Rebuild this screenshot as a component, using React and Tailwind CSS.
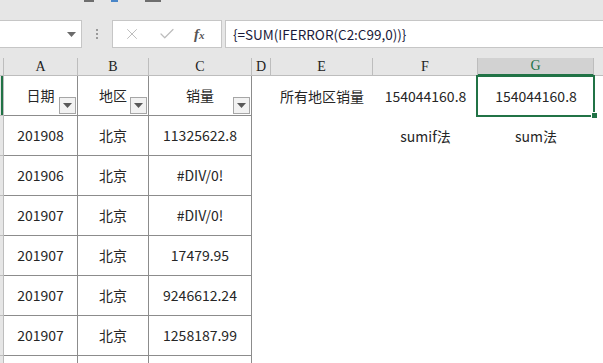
import { X, Check } from "lucide-react";

const cellFont = { fontFamily: '"Noto Sans CJK SC", "Noto Sans", sans-serif' };

const cols = [
  { key: "A", w: "w-[74px]" },
  { key: "B", w: "w-[71px]" },
  { key: "C", w: "w-[103px]" },
  { key: "D", w: "w-[19px]" },
  { key: "E", w: "w-[102px]" },
  { key: "F", w: "w-[105px]" },
  { key: "G", w: "w-[116px]" },
];

const rows = [
  ["201908", "北京", "11325622.8"],
  ["201906", "北京", "#DIV/0!"],
  ["201907", "北京", "#DIV/0!"],
  ["201907", "北京", "17479.95"],
  ["201907", "北京", "9246612.24"],
  ["201907", "北京", "1258187.99"],
  ["", "", ""],
];

const FilterButton = () => (
  <div className="absolute right-[1px] bottom-[1px] w-[17px] h-[17px] bg-[#f2f2f2] border border-[#a6a6a6] flex items-center justify-center">
    <svg width="9" height="5" viewBox="0 0 9 5">
      <path d="M0 0 H9 L4.5 5 Z" fill="#595959" />
    </svg>
  </div>
);

const TableCell = ({ w, children, filter }) => (
  <div
    className={`${w} h-full shrink-0 border-r border-b border-[#8c8c8c] flex items-center justify-center text-[14px] text-[#262626] relative`}
    style={cellFont}
  >
    {children}
    {filter && <FilterButton />}
  </div>
);

const PlainCell = ({ w, children, selected }) => (
  <div
    className={`${w} h-full shrink-0 flex items-center justify-center text-[14px] text-[#262626] relative`}
    style={cellFont}
  >
    {children}
    {selected && (
      <>
        <div className="absolute left-[-2px] top-[-1px] right-[-1px] bottom-[-1px] border-2 border-[#217346]" />
        <div className="absolute right-[-4px] bottom-[-3px] w-[5px] h-[5px] bg-[#217346] border border-white box-content" />
      </>
    )}
  </div>
);

const RowStub = ({ active }) => (
  <div className="w-[4px] h-full shrink-0 bg-[#e6e6e6] border-r border-b border-[#bdbdbd] relative">
    {active && <div className="absolute left-[1px] top-0 bottom-0 w-[2px] bg-[#217346]" />}
  </div>
);

export default function App() {
  return (
    <div className="w-[603px] h-[363px] overflow-hidden bg-white flex flex-col">
      {/* toolbar strip */}
      <div className="h-[58px] shrink-0 bg-[#e6e6e6] flex flex-col">
        <div className="h-[20px] relative">
          <div className="absolute left-[84px] top-0 w-[10px] h-[2px] bg-[#6e6e6e]" />
          <div className="absolute left-[111px] top-0 w-[7px] h-[2px] bg-[#4a86c8]" />
          <div className="absolute left-[145px] top-0 w-[16px] h-[2px] bg-[#6e6e6e]" />
        </div>
        <div className="h-[28px] flex items-stretch">
          <div className="w-[82px] bg-white border border-[#c6c6c6] border-l-0 flex items-center justify-end pr-[5px]">
            <svg width="9" height="5" viewBox="0 0 9 5">
              <path d="M0 0 H9 L4.5 5 Z" fill="#6b6b6b" />
            </svg>
          </div>
          <div className="w-[30px] flex flex-col items-center justify-center gap-[2px]">
            <div className="w-[2px] h-[2px] bg-[#9a9a9a]" />
            <div className="w-[2px] h-[2px] bg-[#9a9a9a]" />
            <div className="w-[2px] h-[2px] bg-[#9a9a9a]" />
          </div>
          <div className="w-[110px] bg-white border border-[#c6c6c6] flex items-center pl-[10px]">
            <X size={18} strokeWidth={1.3} color="#bcbcbc" />
            <Check size={18} strokeWidth={1.6} color="#bcbcbc" className="ml-[17px]" />
            <span
              className="ml-[18px] text-[15px] italic font-bold text-[#555]"
              style={{ fontFamily: '"Liberation Serif", serif' }}
            >
              f<span className="text-[11px]">x</span>
            </span>
          </div>
          <div className="w-[3px]" />
          <div
            className="flex-1 bg-white border border-[#c6c6c6] border-r-0 flex items-center pl-[7px] text-[13.5px] text-[#1a1a3a]"
            style={cellFont}
          >
            {"{=SUM(IFERROR(C2:C99,0))}"}
          </div>
        </div>
      </div>

      {/* column headers */}
      <div
        className="h-[18px] shrink-0 flex bg-[#e6e6e6] text-[14px] text-[#222]"
        style={{ fontFamily: '"Liberation Serif", serif' }}
      >
        <div className="w-[4px] shrink-0 border-r border-b border-[#bdbdbd]" />
        {cols.map((c) =>
          c.key === "G" ? (
            <div
              key={c.key}
              className={`${c.w} shrink-0 bg-[#d2d2d2] border-r border-[#bdbdbd] border-b-2 border-b-[#217346] flex items-center justify-center text-[#217346] leading-none`}
            >
              {c.key}
            </div>
          ) : (
            <div
              key={c.key}
              className={`${c.w} shrink-0 border-r border-b border-[#bdbdbd] flex items-center justify-center leading-none`}
            >
              {c.key}
            </div>
          )
        )}
        <div className="flex-1 border-b border-[#bdbdbd]" />
      </div>

      {/* header data row */}
      <div className="h-[40px] shrink-0 flex">
        <RowStub active />
        <TableCell w="w-[74px]" filter>
          <span className="-mt-[1px]">日期</span>
        </TableCell>
        <TableCell w="w-[71px]" filter>
          地区
        </TableCell>
        <TableCell w="w-[103px]" filter>
          销量
        </TableCell>
        <PlainCell w="w-[19px]" />
        <PlainCell w="w-[102px]">所有地区销量</PlainCell>
        <PlainCell w="w-[105px]">154044160.8</PlainCell>
        <PlainCell w="w-[116px]" selected>
          154044160.8
        </PlainCell>
      </div>

      {rows.map((r, i) => (
        <div key={i} className="h-[40px] shrink-0 flex">
          <RowStub />
          <TableCell w="w-[74px]">{r[0]}</TableCell>
          <TableCell w="w-[71px]">{r[1]}</TableCell>
          <TableCell w="w-[103px]">{r[2]}</TableCell>
          <PlainCell w="w-[19px]" />
          <PlainCell w="w-[102px]" />
          <PlainCell w="w-[105px]">{i === 0 ? "sumif法" : ""}</PlainCell>
          <PlainCell w="w-[116px]">{i === 0 ? "sum法" : ""}</PlainCell>
        </div>
      ))}
    </div>
  );
}
